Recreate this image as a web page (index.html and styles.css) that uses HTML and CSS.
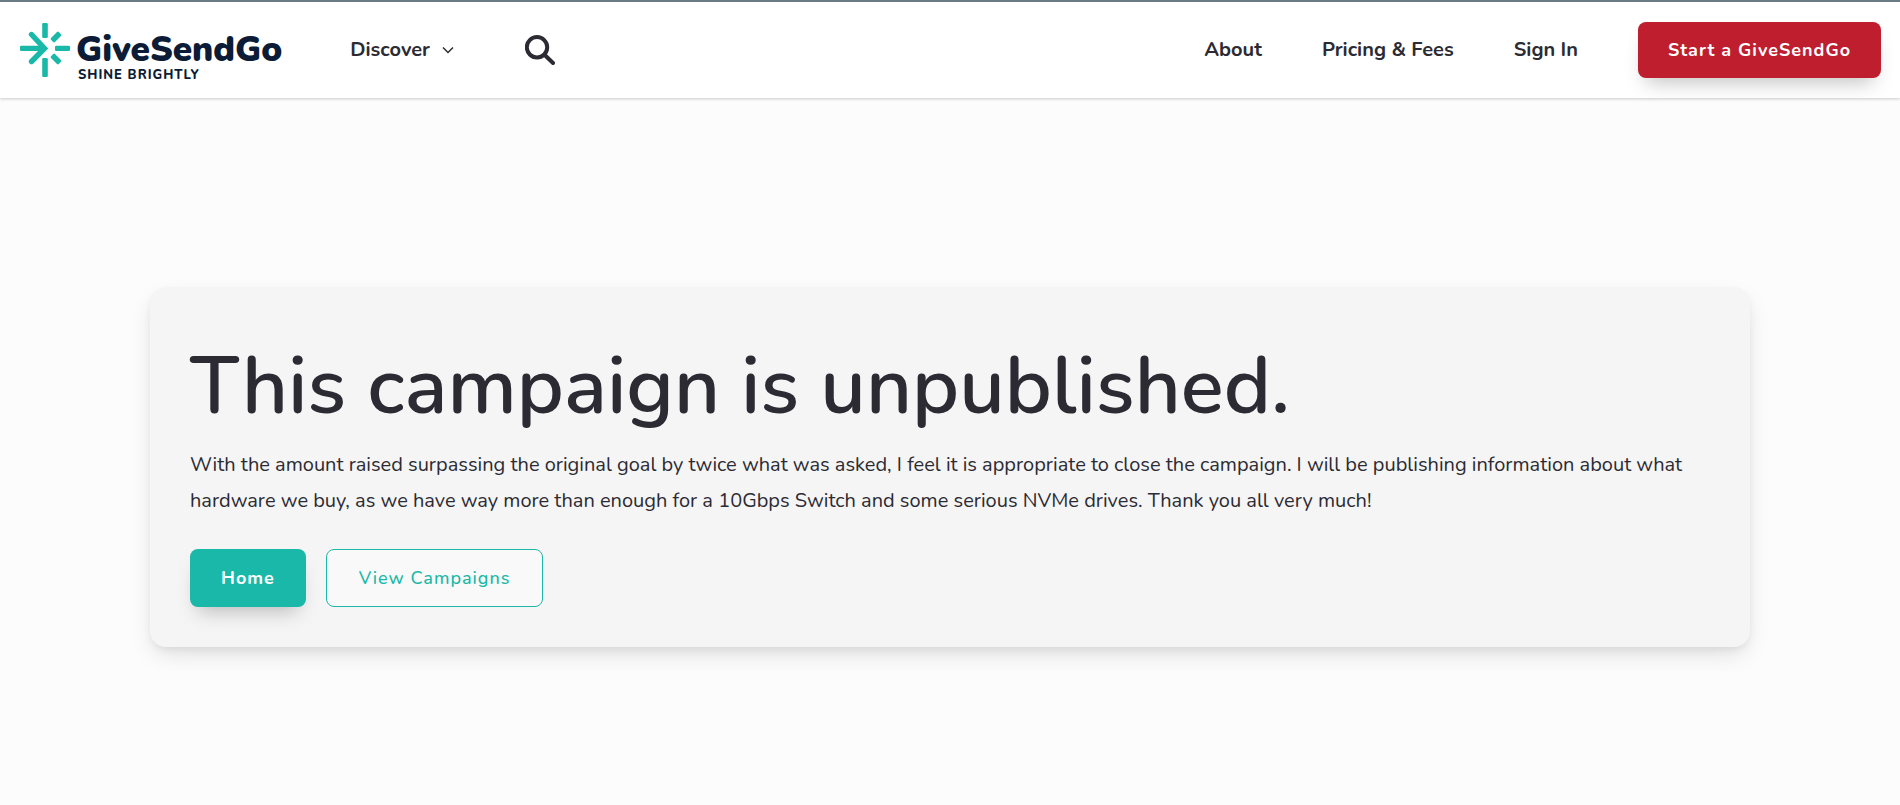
FILE: index.html
```html
<!DOCTYPE html>
<html lang="en">
<head>
<meta charset="utf-8">
<meta name="viewport" content="width=device-width, initial-scale=1">
<title>GiveSendGo</title>
<link rel="stylesheet" href="styles.css">
</head>
<body>
<header class="header">
  <div class="header-start">
    <a class="logo" href="#">
      <svg class="logo-mark" viewBox="0 0 50 54" aria-hidden="true">
        <g fill="#1ab8a8">
          <rect x="22.200" y="0" width="5.600" height="15" rx="1.300"/>
          <rect x="22.200" y="35" width="5.600" height="19" rx="1.300"/>
          <rect x="35" y="22.700" width="15" height="5.400" rx="1.300"/>
          <rect x="30.500" y="11.200" width="11" height="5.600" rx="1.300" transform="rotate(-45 36 14)"/>
          <rect x="30.500" y="33.200" width="11" height="5.600" rx="1.300" transform="rotate(45 36 36)"/>
          <rect x="0" y="22.700" width="25" height="5.400" rx="1.300"/>
        </g>
        <path d="M11.500 11.500L24.500 25.400L11.500 38.500" fill="none" stroke="#1ab8a8" stroke-width="5.400" stroke-linecap="round"/>
      </svg>
      <span class="logo-words">
        <span class="logo-name">GiveSendGo</span>
        <span class="logo-tagline">SHINE BRIGHTLY</span>
      </span>
    </a>
    <button class="nav-item discover" type="button">Discover
      <svg class="chevron" viewBox="0 0 12 8" aria-hidden="true"><path d="M1 1.500L6 6.500L11 1.500" fill="none" stroke="currentColor" stroke-width="1.500"/></svg>
    </button>
    <button class="search" type="button" aria-label="Search">
      <svg class="search-icon" viewBox="0 0 30 30" aria-hidden="true"><g fill="none" stroke="currentColor" stroke-width="4"><circle cx="12" cy="12.300" r="10.200"/><path stroke-linecap="round" d="M20 20.300L28 28"/></g></svg>
    </button>
  </div>
  <nav class="header-end">
    <a class="nav-item" href="#">About</a>
    <a class="nav-item" href="#">Pricing &amp; Fees</a>
    <a class="nav-item" href="#">Sign In</a>
    <a class="button button-start" href="#">Start a GiveSendGo</a>
  </nav>
</header>
<main class="main">
  <section class="card">
    <h1 class="title">This campaign is unpublished.</h1>
    <p class="message">With the amount raised surpassing the original goal by twice what was asked, I feel it is appropriate to close the campaign. I will be publishing information about what hardware we buy, as we have way more than enough for a 10Gbps Switch and some serious NVMe drives. Thank you all very much!</p>
    <div class="actions">
      <a class="button button-home" href="#">Home</a>
      <a class="button button-outline" href="#">View Campaigns</a>
    </div>
  </section>
</main>
</body>
</html>
```
FILE: styles.css
```css
* { box-sizing: border-box; }
body {
  margin: 0;
  background: #fcfcfc;
  color: #2c2b33;
  font-family: Nunito, "Open Sans", sans-serif;
  font-size: 20px;
}
a { color: inherit; text-decoration: none; }
button { padding: 0; border: 0; background: none; color: inherit; font: inherit; cursor: pointer; }
svg { display: block; }
.header {
  display: flex;
  align-items: center;
  justify-content: space-between;
  min-height: 98px;
  padding: 0 19px 0 20px;
  border-top: 2px solid #6b7b83;
  background: #fff;
  box-shadow: 0 1px 3px rgba(0, 0, 0, .2);
}
.header-start { display: flex; align-items: center; }
.header-end { display: flex; align-items: center; gap: 60px; }
.logo { display: flex; align-items: center; gap: 6px; color: #0c1b36; }
.logo-mark { width: 50px; height: 54px; }
.logo-words { display: flex; flex-direction: column; padding-top: 14px; }
.logo-name { font-size: 35px; line-height: 35px; font-weight: 900; }
.logo-tagline { padding-left: 2px; font-size: 13px; line-height: 16px; font-weight: 800; letter-spacing: 1px; }
.nav-item { font-weight: 700; font-size: 20px; line-height: 28px; }
.discover { display: flex; align-items: center; gap: 12px; margin-left: 68px; }
.chevron { width: 12px; height: 8px; }
.search { margin-left: 71px; }
.search-icon { width: 30px; height: 30px; }
.button {
  display: flex;
  align-items: center;
  justify-content: center;
  min-height: 58px;
  padding: 0 31px;
  border-radius: 8px;
  font-size: 18px;
  line-height: 24px;
  letter-spacing: 1px;
}
.button-start, .button-home { color: #fff; font-weight: 700; box-shadow: 0 12px 20px -8px rgba(0, 0, 0, .25); }
.button-start { min-height: 56px; padding: 0 30px; background: #be1e2d; }
.button-home { background: #1ab8a8; }
.button-outline { padding: 0 32px; border: 1px solid #1ab8a8; background: #f9f9f9; color: #1ab8a8; font-weight: 500; }
.main { padding: 189px 24px 24px; }
.card {
  max-width: 1600px;
  margin: 0 auto;
  padding: 40px;
  border-radius: 16px;
  background: #f5f5f5;
  box-shadow: 0 10px 24px -4px rgba(0, 0, 0, .12), 0 4px 8px -2px rgba(0, 0, 0, .08);
}
.title { margin: 0; font-size: 80px; line-height: 120px; font-weight: 600; }
.message { margin: 0; font-size: 20px; line-height: 36px; font-weight: 400; }
.actions { display: flex; gap: 20px; margin-top: 30px; }
```
